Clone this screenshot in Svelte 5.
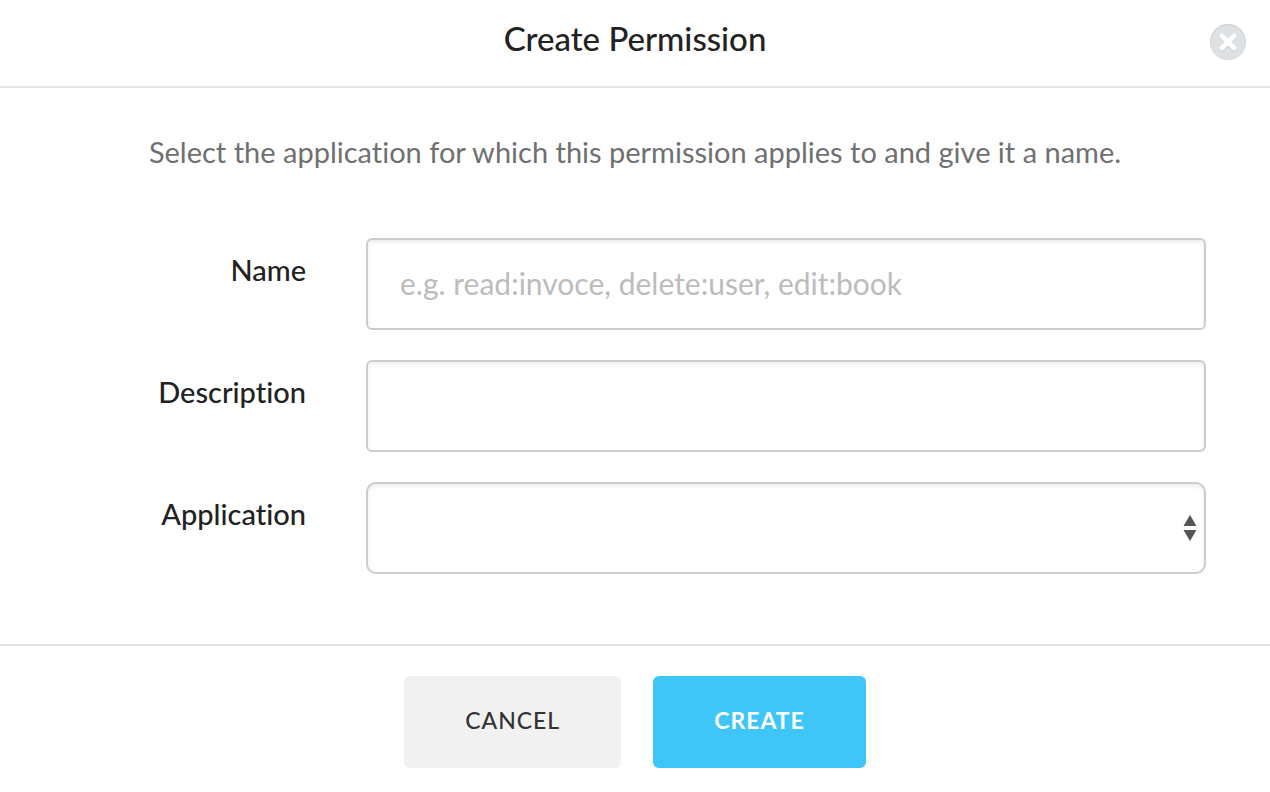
<script>
  let name = $state('');
  let description = $state('');
  let application = $state('');
</script>

<section class="modal" role="dialog" aria-labelledby="title">
  <header>
    <h1 id="title">Create Permission</h1>
    <button class="close" type="button" aria-label="Close">
      <svg viewBox="0 0 36 36" width="36" height="36" aria-hidden="true">
        <circle cx="18" cy="18" r="18" fill="#cdd1d4" />
        <circle cx="18" cy="18.6" r="17.4" fill="#dde1e4" />
        <path d="M12 13.2 24 25.2M24 13.2 12 25.2" stroke="#c9ced2" stroke-width="5" stroke-linecap="round" fill="none" />
        <path d="M12 12 24 24M24 12 12 24" stroke="#fff" stroke-width="5" stroke-linecap="round" fill="none" />
      </svg>
    </button>
  </header>
  <form>
    <div class="body">
      <p>Select the application for which this permission applies to and give it a name.</p>
      <div class="row">
        <label for="name">Name</label>
        <input id="name" type="text" placeholder="e.g. read:invoce, delete:user, edit:book" bind:value={name} />
      </div>
      <div class="row">
        <label for="description">Description</label>
        <input id="description" type="text" bind:value={description} />
      </div>
      <div class="row">
        <label for="application">Application</label>
        <div class="select">
          <select id="application" bind:value={application}><option value=""></option></select>
          <svg viewBox="0 0 14 26" width="14" height="26" aria-hidden="true">
            <path d="M7 0 13.5 11H.5ZM7 26 13.5 15H.5Z" fill="#555" />
          </svg>
        </div>
      </div>
    </div>
    <footer>
      <button class="cancel" type="button">CANCEL</button>
      <button class="create" type="button">CREATE</button>
    </footer>
  </form>
</section>

<style>
  :global(body) { background: #fff; }
  .modal, input, select, button { font-family: Lato, "Open Sans", sans-serif; }
  .modal { color: #222; font-variant-ligatures: none; }
  header {
    display: grid;
    grid-template-columns: 36px 1fr 36px;
    align-items: start;
    padding: 24px 24px 26px;
    border-bottom: 2px solid #e4e4e4;
  }
  h1 { grid-column: 2; margin: 0; font-size: 33px; line-height: 28px; font-weight: 500; text-align: center; }
  .close { width: 36px; height: 36px; padding: 0; border: 0; border-radius: 50%; background: none; cursor: pointer; }
  .close svg { display: block; }
  .body { padding: 44px 64px 70px; }
  p { margin: 0 0 66px; font-size: 29px; line-height: 40px; color: #6f7072; text-align: center; }
  .row { display: grid; grid-template-columns: 242px 1fr; gap: 60px; }
  .row + .row { margin-top: 30px; }
  label { padding-top: 12px; font-size: 29px; line-height: 40px; font-weight: 500; text-align: right; }
  input, select {
    box-sizing: border-box;
    width: 100%;
    height: 92px;
    padding: 0 32px 2px;
    border: 2px solid #ccc;
    border-radius: 6px;
    background: #fff;
    box-shadow: inset 0 2px 4px rgba(0, 0, 0, 0.08);
    color: #333;
    font-size: 30px;
  }
  input::placeholder { color: #bcbcbc; opacity: 1; }
  select { display: block; appearance: none; border-radius: 10px; }
  .select { position: relative; }
  .select svg { position: absolute; right: 9px; top: 33px; pointer-events: none; }
  footer { display: flex; justify-content: center; gap: 32px; padding: 30px 24px 24px; border-top: 2px solid #e4e4e4; }
  footer button {
    height: 92px;
    padding: 0 61px 4px;
    border: 0;
    border-radius: 6px;
    font-size: 23px;
    font-weight: 500;
    letter-spacing: 1px;
    cursor: pointer;
  }
  .cancel { background: #f1f1f1; color: #333; }
  .create { background: #3dc6f7; color: #fff; font-weight: 700; }
</style>
